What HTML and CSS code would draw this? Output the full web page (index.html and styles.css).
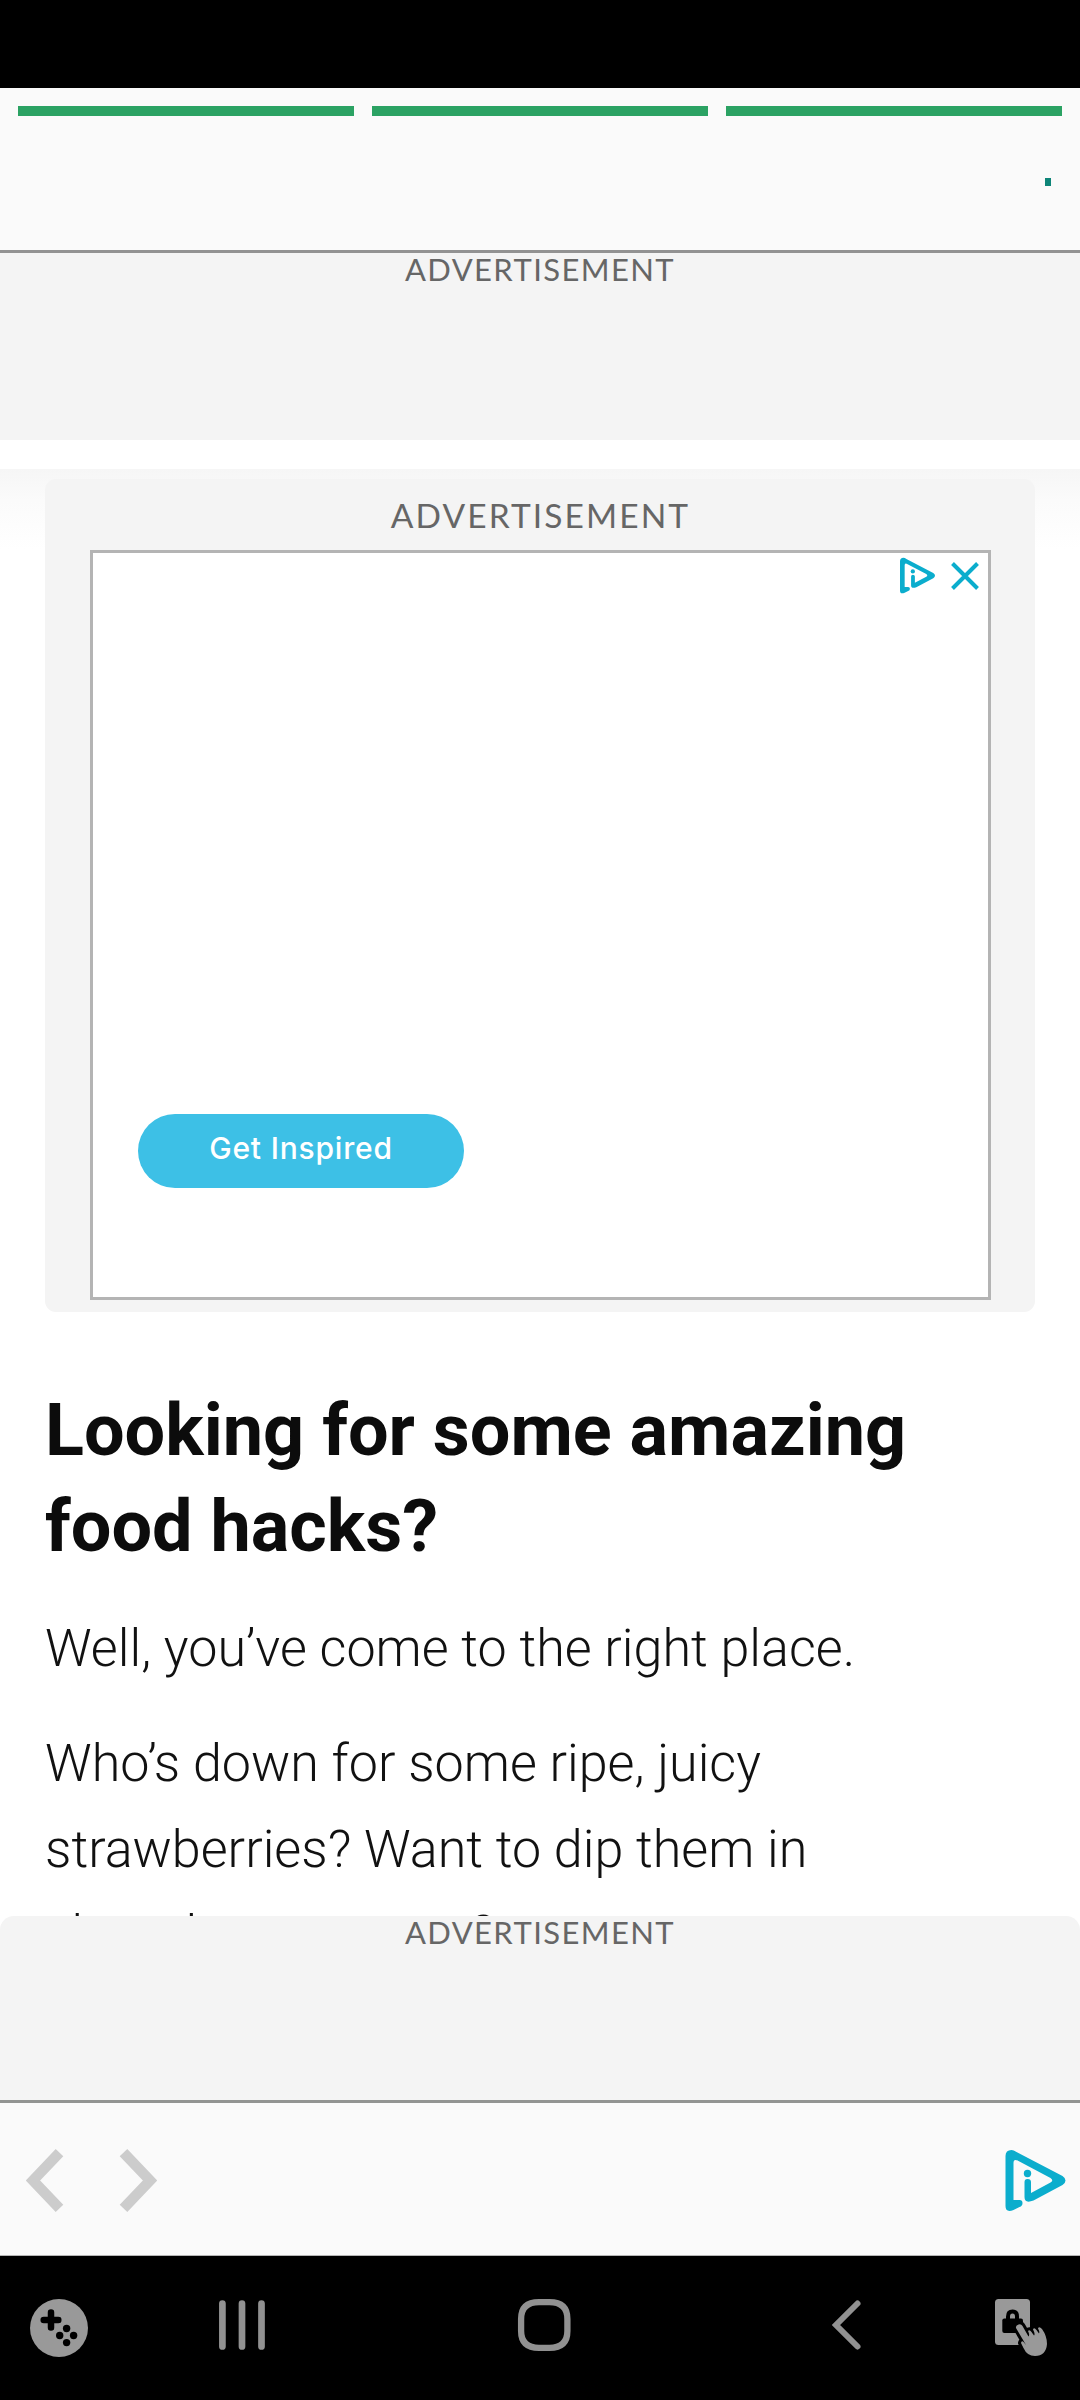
FILE: index.html
```html
<!DOCTYPE html>
<html lang="en">
<head>
<meta charset="utf-8">
<title>Food hacks</title>
<link rel="stylesheet" href="styles.css">
</head>
<body>
<svg class="defs" aria-hidden="true">
  <symbol id="adchoices" viewBox="0 0 60 61">
    <path fill="currentColor" fill-rule="evenodd" d="M0 6 Q0 0 6 0 Q8 0 11 2 L57 26 Q60 28 60 30.500 Q60 33 57 35 L28 50.500 Q19 54 19 47 V32 Q19 29 22 29 Q25.500 29 25.500 32 V43 L45 32.500 Q48.500 30.500 45 28 L13 11 Q8 8 8 13 V50 H14 Q17 50 17 53 Q17 56 14 57 L8 60 Q0 63 0 56 Z"/>
    <circle cx="22" cy="23.500" r="3.700" fill="currentColor"/>
  </symbol>
</svg>
<div class="screen">
  <div class="status-bar"></div>
  <header class="top-banner">
    <div class="progress"><span></span><span></span><span></span></div>
    <i class="dot"></i>
  </header>
  <section class="ad-strip">ADVERTISEMENT</section>
  <main class="content">
    <div class="article">
      <section class="ad-card">
        <div class="ad-title">ADVERTISEMENT</div>
        <div class="ad-box">
          <div class="ad-controls">
            <svg class="choices-small"><use href="#adchoices"/></svg>
            <svg class="close" viewBox="0 0 28 28"><path d="M1.500 1.500 L26.500 26.500 M26.500 1.500 L1.500 26.500"/></svg>
          </div>
          <a class="cta">Get Inspired</a>
        </div>
      </section>
      <h1>Looking for some amazing food&nbsp;hacks?</h1>
      <p>Well, you’ve come to the right place.</p>
      <p>Who’s down for some ripe, juicy<br>strawberries? Want to dip them in<br><span class="last-line">chocolate mousse?</span></p>
    </div>
  </main>
  <section class="ad-strip ad-strip-bottom">ADVERTISEMENT</section>
  <footer class="bottom-banner">
    <div class="arrows">
      <svg viewBox="0 0 38 63"><path d="M33.500 3.700 L7 31.500 L33.500 59.300"/></svg>
      <svg viewBox="0 0 38 63"><path d="M4.500 3.700 L31 31.500 L4.500 59.300"/></svg>
    </div>
    <svg class="choices-large"><use href="#adchoices"/></svg>
  </footer>
  <nav class="system-nav">
    <svg viewBox="0 0 1080 144">
      <circle cx="59" cy="72" r="29" fill="#999"/>
      <path d="M51 56.500V71.500M43.700 64H58.300" stroke="#000" stroke-width="6.500" stroke-linecap="round"/>
      <path d="M51 54.500V73.500M42 64H60.500" stroke="#000" stroke-width="5"/>
      <g fill="#000"><circle cx="66.600" cy="72.500" r="3.700"/><circle cx="59.700" cy="79.500" r="3.700"/><circle cx="73.600" cy="79.500" r="3.700"/><circle cx="66.600" cy="86.600" r="3.700"/></g>
      <path d="M222.400 47.500V90.500M242 47.500V90.500M261.500 47.500V90.500" stroke="#919191" stroke-width="6.700" stroke-linecap="round"/>
      <path d="M539 46.200H549.500Q567.400 46.200 567.400 63V75Q567.400 91.800 549.500 91.800H539Q521.100 91.800 521.100 75V63Q521.100 46.200 539 46.200Z" fill="none" stroke="#919191" stroke-width="6.300"/>
      <path d="M857.500 47.500L836 69L857.500 90.500" fill="none" stroke="#919191" stroke-width="6" stroke-linecap="round"/>
      <rect x="995" y="43" width="35" height="46" rx="3.500" fill="#999"/>
      <path d="M1008 64V60.500Q1008 55.500 1012.500 55.500Q1017 55.500 1017 60.500V64" fill="none" stroke="#000" stroke-width="4"/>
      <rect x="1002.300" y="62.500" width="20.700" height="14.500" rx="2" fill="#000"/>
      <path d="M1018.500 68.500Q1021 67.500 1022.500 70L1028.500 80.500Q1030 79 1028 75Q1029.500 73 1031.500 76L1034 79.500Q1035.500 78 1033 73.500Q1034 71 1036.500 74L1039 77.500Q1040 75.500 1038 72.500Q1039 70 1042 73Q1047 80 1047 88Q1046 100 1035 100Q1027 100 1023.500 92L1021 87Q1021.500 84 1024 86.500L1026 89L1016 72Q1015.500 69.500 1018.500 68.500Z" fill="#999" stroke="#000" stroke-width="6" stroke-linejoin="round" paint-order="stroke"/>
    </svg>
  </nav>
</div>
</body>
</html>
```
FILE: styles.css
```css
* { box-sizing: border-box; }
body { margin: 0; background: #fff; }
.defs { display: none; }
.screen {
  width: 1080px;
  height: 2400px;
  display: flex;
  flex-direction: column;
  overflow: hidden;
  background: #fff;
}
.screen > * { flex: none; }
.status-bar { height: 88px; background: #000; }
.top-banner {
  height: 165px;
  padding: 18px 18px 0;
  background: #fafafa;
  border-bottom: 3px solid #929292;
  display: flex;
  flex-direction: column;
  align-items: flex-end;
}
.progress {
  width: 100%;
  display: grid;
  grid-template-columns: repeat(3, 1fr);
  gap: 18px;
}
.progress span { height: 10px; background: #2ba263; }
.dot { width: 6px; height: 8px; margin: 62px 11px 0 0; background: #0e8578; }
.ad-strip {
  height: 187px;
  background: #f4f4f4;
  color: #666;
  font: 400 31px/32px Lato, sans-serif;
  letter-spacing: 1.4px;
  text-align: center;
}
.content {
  height: 1476px;
  padding-top: 29px;
  overflow: hidden;
}
.article {
  padding: 10px 45px 0;
  background: linear-gradient(#f6f6f6, #fbfbfb 40%, #fff) 0 0 / 100% 80px no-repeat;
}
.ad-card {
  height: 833px;
  padding: 18px 44px 0 45px;
  background: #f4f4f4;
  border-radius: 11px;
}
.ad-title {
  height: 53px;
  color: #666;
  font: 400 33.500px/36px Lato, sans-serif;
  letter-spacing: 2.1px;
  text-align: center;
}
.ad-box {
  height: 750px;
  border: 3px solid #b4b4b4;
  background: #fff;
  display: flex;
  flex-direction: column;
  justify-content: space-between;
  align-items: flex-start;
}
.ad-controls {
  align-self: flex-end;
  display: flex;
  align-items: center;
  gap: 16px;
  padding: 4px 9px 0 0;
  color: #0badcd;
}
.choices-small { width: 35px; height: 37px; }
.close { width: 28px; height: 28px; fill: none; stroke: #0badcd; stroke-width: 4; }
.cta {
  width: 326px;
  height: 74px;
  margin: 0 0 109px 45px;
  border-radius: 37px;
  background: #3dc0e6;
  color: #fff;
  font: 500 30px/68px Inter, sans-serif;
  letter-spacing: 0.8px;
  text-align: center;
}
h1 {
  margin: 71px 0 0;
  color: #0c0c0c;
  font: 700 72px/96px Roboto, sans-serif;
}
p {
  margin: 29.5px 0 0;
  color: #111;
  font: 300 52.050px/85.500px Roboto, sans-serif;
  white-space: nowrap;
}
h1 + p { margin-top: 31px; }
.last-line { word-spacing: 6px; }
.ad-strip-bottom { height: 184px; border-radius: 14px 14px 0 0; }
.bottom-banner {
  height: 156px;
  padding: 0 14px 0 26px;
  background: #fafafa;
  border-top: 3px solid #929492;
  border-bottom: 1px solid #b5b5b5;
  display: flex;
  justify-content: space-between;
  align-items: center;
  color: #0badcd;
}
.arrows { display: flex; gap: 55px; margin-top: 3px; }
.arrows svg { width: 38px; height: 63px; fill: none; stroke: #ccc; stroke-width: 10.500; }
.choices-large { width: 61px; height: 61px; margin-top: 3px; }
.system-nav { height: 144px; background: #000; }
.system-nav svg { display: block; width: 1080px; height: 144px; }
```
